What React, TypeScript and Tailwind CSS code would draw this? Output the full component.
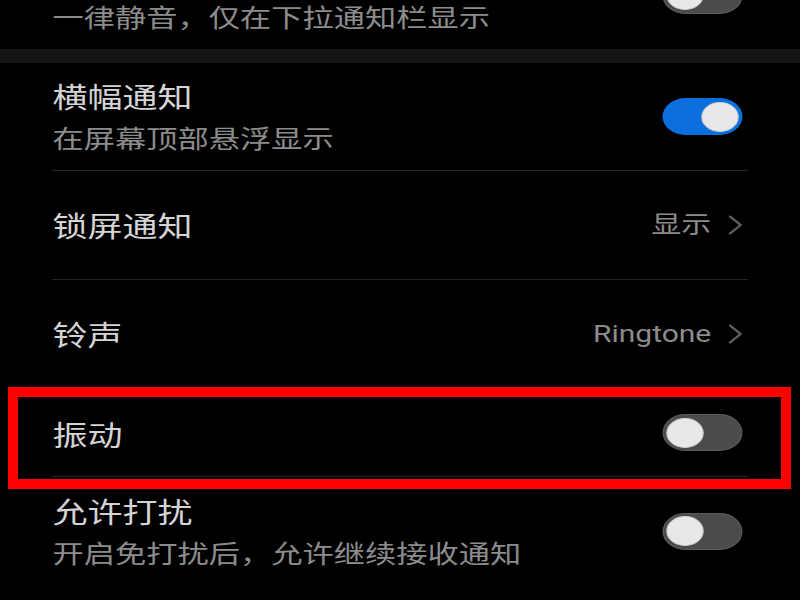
import React from "react";

const FONT = { fontFamily: '"Noto Sans CJK SC", "Noto Sans", sans-serif' };

function Toggle({ on }: { on: boolean }) {
  return (
    <div
      className={
        on
          ? "w-[64px] h-[37px] rounded-full bg-[#0b6fde] flex items-center justify-end px-[3px] shrink-0 mr-[4px]"
          : "w-[64px] h-[37px] rounded-full bg-[#4b4b4b] border border-[#5a5a5a] flex items-center justify-start px-[2px] shrink-0 mr-[4px]"
      }
    >
      <div className="w-[30px] h-[30px] rounded-full bg-[#e8e8e8] border border-[#cfcfcf]" />
    </div>
  );
}

function Chevron() {
  return (
    <svg width="12" height="20" viewBox="0 0 12 20" className="shrink-0 mr-[4px]">
      <polyline points="2,1.5 10.5,10 2,18.5" fill="none" stroke="#5e5e5e" strokeWidth="2" strokeLinecap="round" strokeLinejoin="round" />
    </svg>
  );
}

function SwitchRow({ title, sub, on, divider = true }: { title: string; sub: string; on: boolean; divider?: boolean }) {
  return (
    <div className={divider ? "h-[108px] flex items-center justify-between border-b border-[#262626]" : "h-[108px] flex items-center justify-between"}>
      <div className="flex flex-col pt-[1px]">
        <div className="h-[40px] text-[28px] leading-[40px] text-[#d4d4d4]">{title}</div>
        <div className="text-[25px] leading-[42px] text-[#8c8c8c]">{sub}</div>
      </div>
      <Toggle on={on} />
    </div>
  );
}

function NavRow({ title, value, h }: { title: string; value: string; h: string }) {
  return (
    <div className={h + " flex items-center justify-between border-b border-[#262626]"}>
      <div className="text-[28px] leading-[40px] text-[#d4d4d4]">{title}</div>
      <div className="flex items-center gap-[13px]">
        <div className="text-[24px] leading-[32px] text-[#8c8c8c]" style={{ fontFamily: 'Roboto, "Noto Sans CJK SC", sans-serif' }}>
          {value}
        </div>
        <Chevron />
      </div>
    </div>
  );
}

export default function App() {
  return (
    <div className="relative w-[800px] h-[600px] bg-black overflow-hidden" style={FONT}>
      <div className="w-[640px] origin-left scale-x-125">
        <div className="-mt-[59px] flex flex-col">
          <div className="px-[42px]">
            <SwitchRow title="" sub="一律静音，仅在下拉通知栏显示" on={false} divider={false} />
          </div>
          <div className="h-[14px] bg-[#141414]" />
          <div className="px-[42px] flex flex-col">
            <SwitchRow title="横幅通知" sub="在屏幕顶部悬浮显示" on={true} />
            <NavRow title="锁屏通知" value="显示" h="h-[109px]" />
            <NavRow title="铃声" value="Ringtone" h="h-[109px]" />
            <div className="h-[88px] flex items-center justify-between border-b border-[#262626]">
              <div className="text-[28px] leading-[40px] text-[#d4d4d4] pt-[2px]">振动</div>
              <Toggle on={false} />
            </div>
            <SwitchRow title="允许打扰" sub="开启免打扰后，允许继续接收通知" on={false} divider={false} />
          </div>
        </div>
      </div>
      <div className="absolute left-[8px] top-[387px] w-[783px] h-[102px] border-[10px] border-[#ff0000]" />
    </div>
  );
}
